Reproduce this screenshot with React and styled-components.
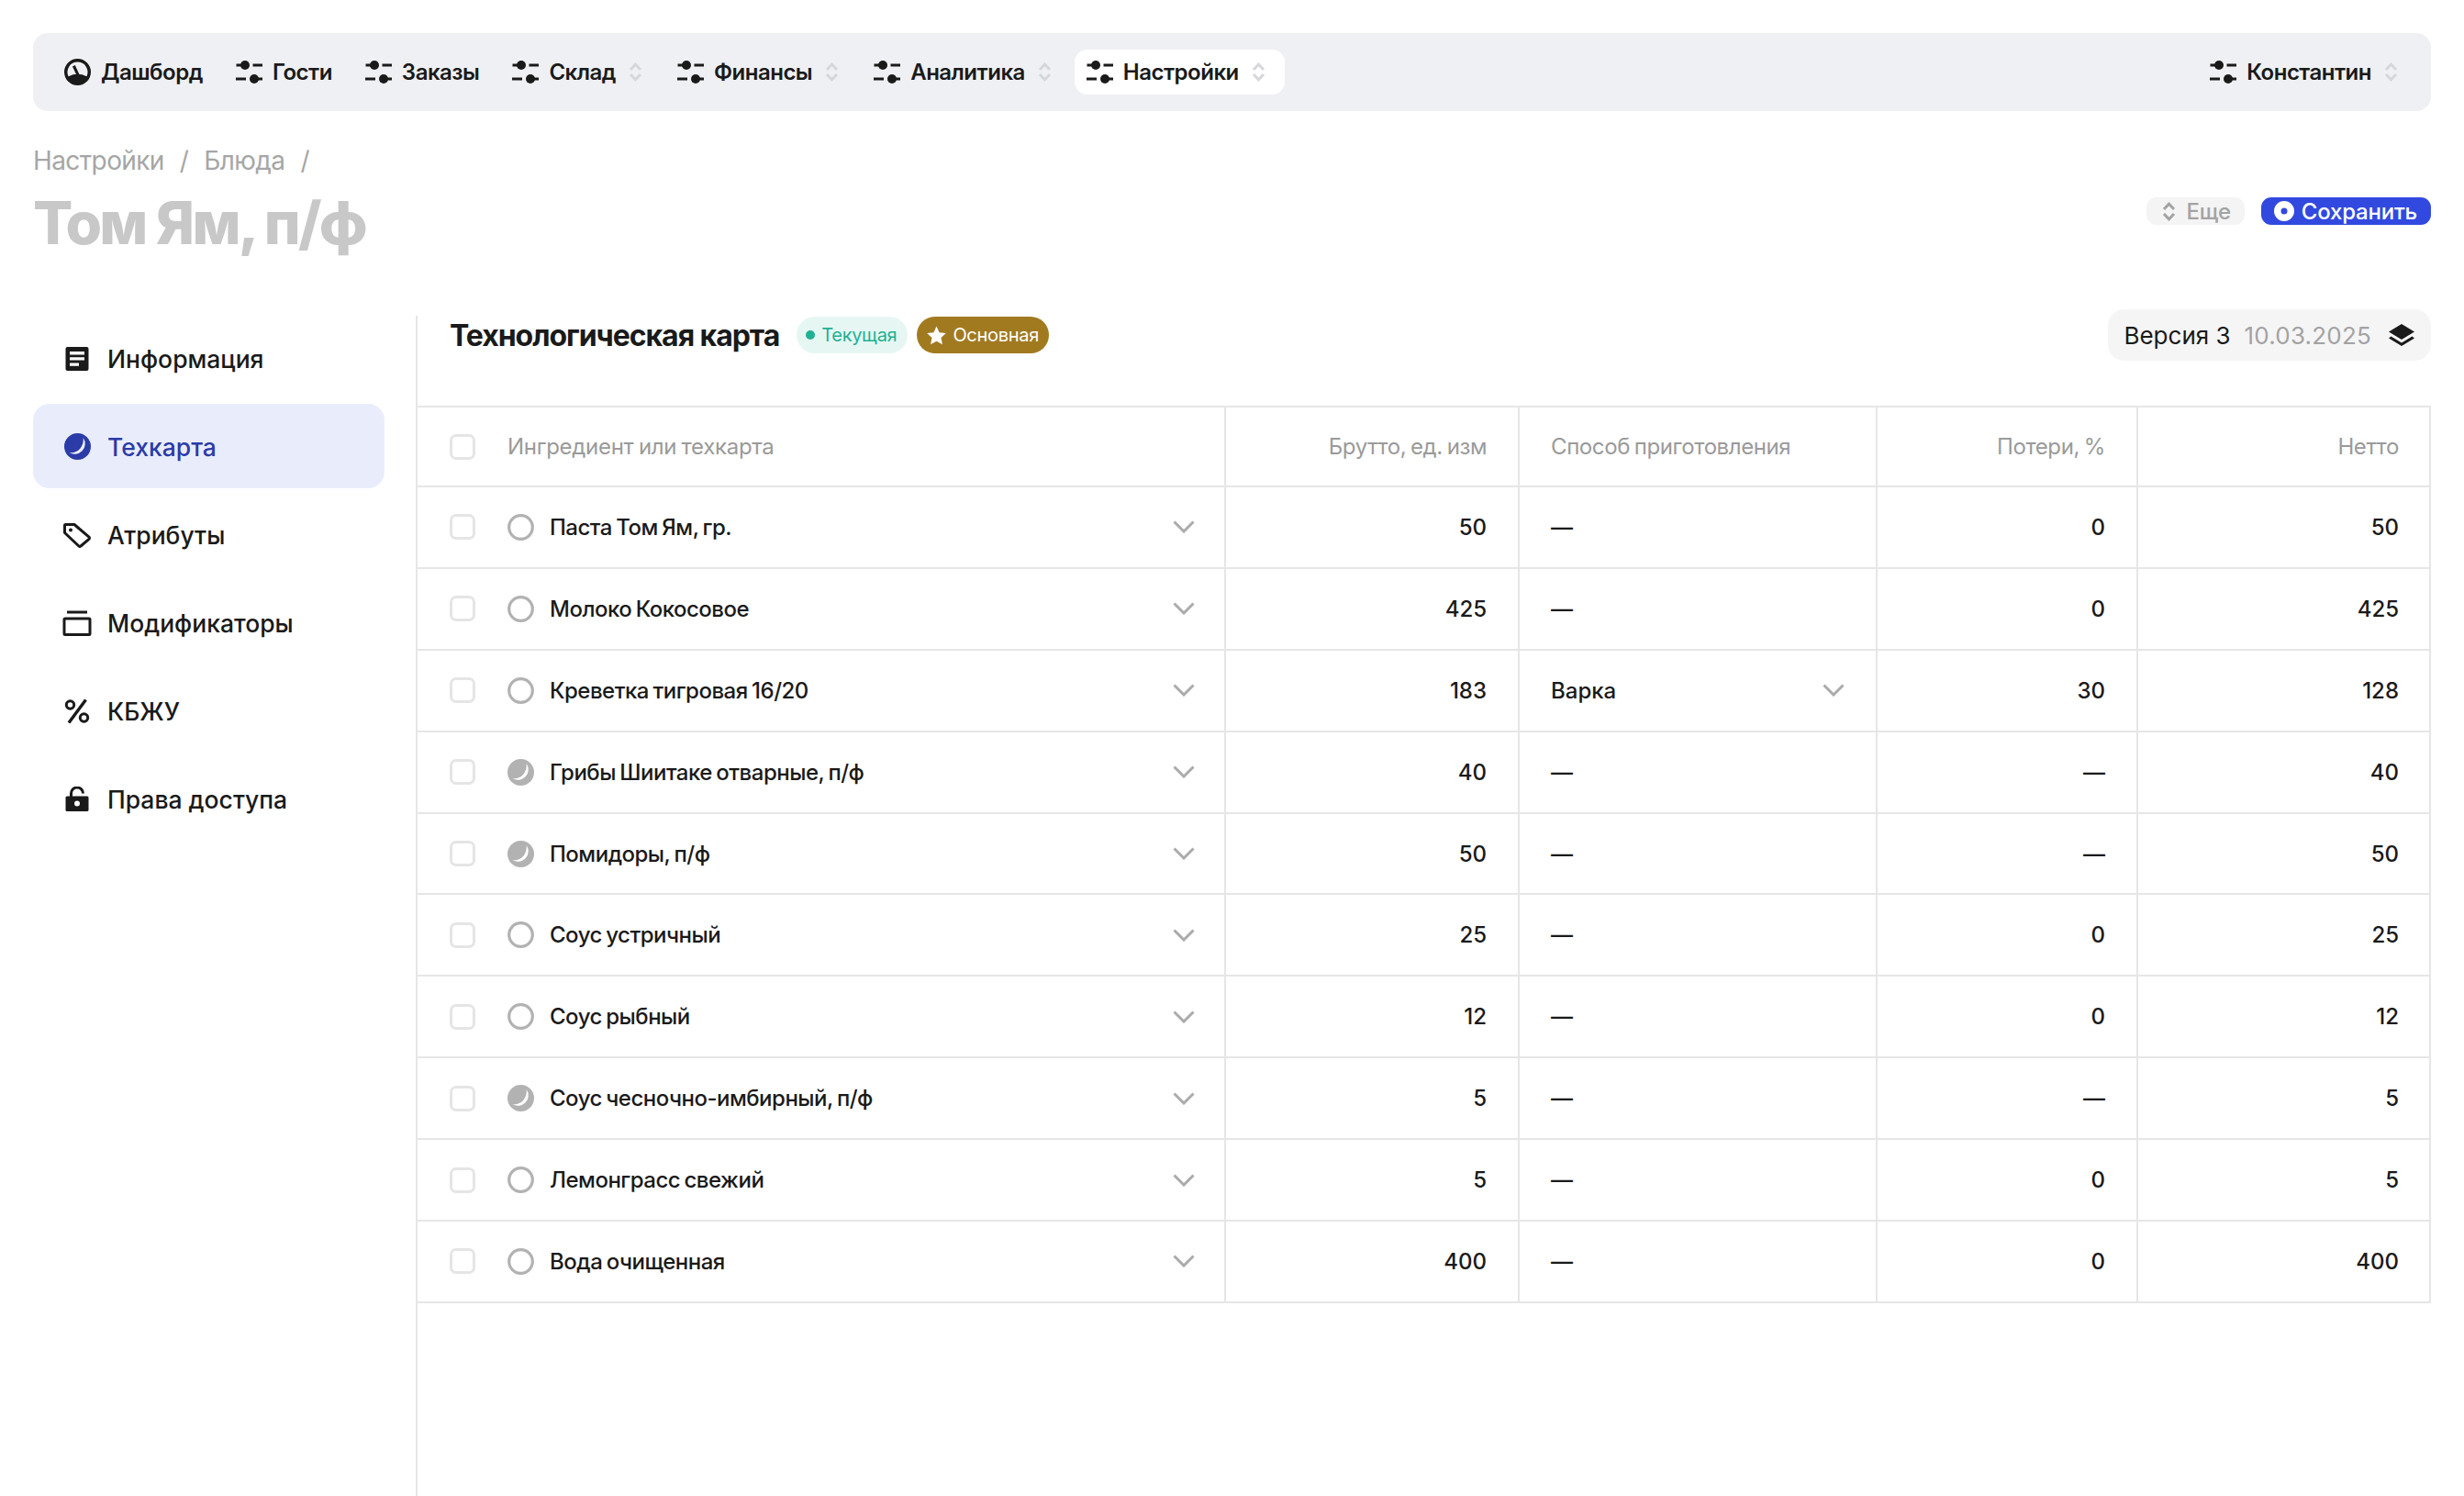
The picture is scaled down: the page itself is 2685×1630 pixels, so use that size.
import styled, { createGlobalStyle } from 'styled-components';

const Global = createGlobalStyle`
  * { box-sizing: border-box; }
  html, body { margin: 0; padding: 0; background: #fff; }
  body { font-family: Inter, "Noto Sans", sans-serif; color: #1a1a1a; }
`;

const Page = styled.div`
  height: 1630px;
  padding: 36px 36px 0;
  display: flex;
  flex-direction: column;
  overflow: hidden;
`;

const Nav = styled.nav`
  height: 85px;
  flex: none;
  background: #eff0f3;
  border-radius: 16px;
  padding: 0 21px;
  display: flex;
  align-items: center;
  gap: 10px;
`;

const NavItem = styled.div`
  height: 49px;
  padding: 0 ${(p) => (p.$active ? '19px' : '13px')} 0 13px;
  display: flex;
  align-items: center;
  gap: 11px;
  border-radius: 14px;
  font-size: 24px;
  font-weight: 600;
  letter-spacing: -0.5px;
  white-space: nowrap;
  background: ${(p) => (p.$active ? '#fff' : 'transparent')};
  margin-left: ${(p) => (p.$end ? 'auto' : '0')};
`;

const NavArrow = styled.span`
  display: flex;
  margin: 0 2px 0 3px;
`;

const Head = styled.header`
  margin-top: 35px;
  height: 188px;
  flex: none;
  display: flex;
  justify-content: space-between;
  align-items: flex-start;
`;

const Crumbs = styled.div`
  display: flex;
  gap: 17px;
  font-size: 28px;
  line-height: 38px;
  letter-spacing: -0.6px;
  color: #a6a6a6;
`;

const Title = styled.h1`
  margin: 15px 0 0;
  font-size: 64px;
  line-height: 68px;
  font-weight: 800;
  letter-spacing: -2.8px;
  color: #c8c8c8;
`;

const Actions = styled.div`
  margin-top: 59px;
  display: flex;
  gap: 18px;
`;

const Action = styled.div`
  height: 30px;
  padding: 0 15px 0 ${(p) => (p.$primary ? '14px' : '17px')};
  display: flex;
  align-items: center;
  gap: ${(p) => (p.$primary ? '8px' : '12px')};
  border-radius: 11px;
  font-size: 24px;
  font-weight: 500;
  letter-spacing: -0.2px;
  background: ${(p) => (p.$primary ? '#3249e0' : '#f4f4f5')};
  color: ${(p) => (p.$primary ? '#fff' : '#a3a3a3')};
`;

const Body = styled.div`
  flex: 1;
  display: flex;
  min-height: 0;
`;

const Side = styled.aside`
  width: 417px;
  flex: none;
  padding-right: 34px;
  display: flex;
  flex-direction: column;
  gap: 4px;
`;

const SideItem = styled.div`
  height: 92px;
  padding: 1px 0 0 32px;
  display: flex;
  align-items: center;
  gap: 17px;
  border-radius: 18px;
  font-size: 26.5px;
  font-weight: 500;
  background: ${(p) => (p.$active ? '#e9edfb' : 'transparent')};
  color: ${(p) => (p.$active ? '#2b3ba8' : '#1a1a1a')};
`;

const SideIcon = styled.span`
  width: 32px;
  display: flex;
  justify-content: center;
`;

const Main = styled.main`
  flex: 1;
  min-width: 0;
  border-left: 2px solid #e6e6e6;
`;

const SectionHead = styled.div`
  height: 42px;
  margin-bottom: 56px;
  padding-left: 35px;
  display: flex;
  align-items: center;
  gap: 19px;
`;

const SectionTitle = styled.h2`
  margin: 0;
  font-size: 32px;
  font-weight: 700;
  letter-spacing: -1.05px;
  white-space: nowrap;
`;

const Badges = styled.div`
  display: flex;
  gap: 10px;
`;

const Badge = styled.div`
  height: 40px;
  padding: 0 ${(p) => (p.$gold ? '11px' : '12px')} 0 10px;
  display: flex;
  align-items: center;
  gap: ${(p) => (p.$gold ? '6px' : '7px')};
  border-radius: 20px;
  font-size: 20px;
  letter-spacing: -0.3px;
  background: ${(p) => (p.$gold ? '#a17a20' : '#e6f7f3')};
  color: ${(p) => (p.$gold ? '#fff' : '#1fb193')};
`;

const Dot = styled.span`
  width: 10px;
  height: 10px;
  border-radius: 50%;
  background: #1fb193;
`;

const Version = styled.div`
  margin-left: auto;
  height: 56px;
  padding: 0 17px;
  display: flex;
  align-items: center;
  gap: 15px;
  border-radius: 18px;
  background: #f5f5f6;
  font-size: 26px;
`;

const VersionDate = styled.span`
  color: #a3a3a3;
  letter-spacing: 0.2px;
  margin-right: 3px;
`;

const Table = styled.div`
  border-top: 2px solid #e6e6e6;
  border-right: 2px solid #e6e6e6;
`;

const Row = styled.div`
  display: grid;
  grid-template-columns: 879px 320px 390px 284px 1fr;
  height: ${(p) => (p.$header ? '87px' : '88.9px')};
  border-bottom: 2px solid #e6e6e6;
  font-size: 24px;
  color: ${(p) => (p.$header ? '#9a9a9a' : '#1a1a1a')};

  & > :last-child {
    padding-right: 33px;
  }
`;

const Cell = styled.div`
  display: flex;
  align-items: center;
  justify-content: ${(p) => (p.$right ? 'flex-end' : 'flex-start')};
  padding: 0 34px;
  border-left: 2px solid #e6e6e6;
  font-weight: ${(p) => (p.$header ? 400 : 450)};
  ${(p) => p.$header && 'letter-spacing: -0.4px; word-spacing: -1.5px;'}
`;

const NameCell = styled.div`
  display: flex;
  align-items: center;
  padding: 0 32px 0 35px;
  font-weight: ${(p) => (p.$header ? 400 : 450)};
  ${(p) => p.$header && 'letter-spacing: -0.3px; word-spacing: -1px;'}
`;

const Check = styled.span`
  width: 28px;
  height: 28px;
  flex: none;
  margin-right: 35px;
  border: 3px solid #e5e5e5;
  border-radius: 7px;
`;

const Name = styled.span`
  margin-left: 17px;
  flex: 1;
  letter-spacing: -0.5px;
  word-spacing: -1.5px;
`;

const Select = styled.div`
  flex: 1;
  display: flex;
  align-items: center;
  justify-content: space-between;
`;

const Sliders = () => (
  <svg width="29" height="25" viewBox="0 0 29 25" fill="none">
    <circle cx="10" cy="5" r="5" fill="#1a1a1a" />
    <circle cx="20" cy="20" r="5" fill="#1a1a1a" />
    <path d="M0.5 5H10M18.5 5H29M0 20H11M20 20H29" stroke="#1a1a1a" strokeWidth="3" />
  </svg>
);

const UpDown = ({ color = '#d6d7db' }) => (
  <svg width="15" height="23" viewBox="0 0 15 23" fill="none">
    <path d="M2 9L7.5 3.2L13 9M2 14L7.5 19.8L13 14" stroke={color} strokeWidth="3" />
  </svg>
);

const Gauge = () => (
  <svg width="29" height="29" viewBox="0 0 28 28">
    <path
      fillRule="evenodd"
      fill="#1a1a1a"
      d="M14 0a14 14 0 1 0 0 28a14 14 0 1 0 0-28ZM14 3.4A10.6 10.6 0 0 0 4.4 18.6Q14 13.8 23.6 18.6A10.6 10.6 0 0 0 14 3.4Z"
    />
    <path d="M10 7.5L14.5 17" stroke="#1a1a1a" strokeWidth="3" />
  </svg>
);

const Moon = ({ color, size = 29 }) => (
  <svg width={size} height={size} viewBox="0 0 28 28">
    <path
      fillRule="evenodd"
      fill={color}
      d="M14 0a14 14 0 1 0 0 28a14 14 0 1 0 0-28ZM20 4.800A11 11 0 0 1 5 20.300C13 22 21 15 20 4.800Z"
    />
  </svg>
);

const Ring = () => (
  <svg width="29" height="29" viewBox="0 0 29 29" fill="none">
    <circle cx="14.5" cy="14.5" r="12.8" stroke="#b2b2b2" strokeWidth="3.2" />
  </svg>
);

const Chevron = () => (
  <svg width="24" height="14" viewBox="0 0 24 14" fill="none">
    <path d="M1.5 1.5L12 12L22.5 1.5" stroke="#ababab" strokeWidth="3" />
  </svg>
);

const Doc = () => (
  <svg width="32" height="28" viewBox="0 0 32 28">
    <path
      fillRule="evenodd"
      fill="#1a1a1a"
      d="M5.5 1h21a2 2 0 0 1 2 2v22a2 2 0 0 1-2 2h-21a2 2 0 0 1-2-2V3a2 2 0 0 1 2-2ZM8 6v3.4h16V6ZM8 12.2v3.4h16v-3.4ZM8 18.4v3.4h10v-3.4Z"
    />
  </svg>
);

const Tag = () => (
  <svg width="32" height="28" viewBox="0 0 32 28" fill="none">
    <path
      d="M3.5 2.5h9.5L29 16.2a1.5 1.5 0 0 1 0 2.2L20 26a1.5 1.5 0 0 1-2.1 0L2.500 11.500V3.500a1 1 0 0 1 1-1Z"
      stroke="#1a1a1a"
      strokeWidth="3"
      strokeLinejoin="round"
    />
    <circle cx="9" cy="8.5" r="2" fill="#1a1a1a" />
  </svg>
);

const Layers = () => (
  <svg width="32" height="28" viewBox="0 0 32 28" fill="none">
    <path d="M5 2h22" stroke="#1a1a1a" strokeWidth="3" />
    <rect x="2" y="9" width="28" height="17.500" rx="1" stroke="#1a1a1a" strokeWidth="3" />
  </svg>
);

const Percent = () => (
  <svg width="32" height="28" viewBox="0 0 32 28" fill="none">
    <circle cx="8.500" cy="7" r="4.200" stroke="#1a1a1a" strokeWidth="3" />
    <circle cx="23.500" cy="21" r="4.200" stroke="#1a1a1a" strokeWidth="3" />
    <path d="M25.500 1.500L7 26.500" stroke="#1a1a1a" strokeWidth="3.400" />
  </svg>
);

const Lock = () => (
  <svg width="32" height="28" viewBox="0 0 32 28">
    <path d="M9.500 12V7.500a6.500 6.500 0 0 1 13 0" fill="none" stroke="#1a1a1a" strokeWidth="3" />
    <path
      fillRule="evenodd"
      fill="#1a1a1a"
      d="M5 10.500h22a1.500 1.500 0 0 1 1.500 1.500v13.500a1.500 1.500 0 0 1-1.500 1.500H5a1.500 1.500 0 0 1-1.500-1.500V12A1.500 1.500 0 0 1 5 10.500ZM16 15.500a3 3 0 1 0 0 6a3 3 0 1 0 0-6Z"
    />
  </svg>
);

const Star = () => (
  <svg width="23" height="23" viewBox="0 0 24 24">
    <path fill="#fff" d="M12 1.500l3.200 7 7.600.9-5.600 5.200 1.500 7.600L12 18.400l-6.700 3.800 1.500-7.600L1.200 9.400l7.600-.9Z" />
  </svg>
);

const Stack = () => (
  <svg width="30" height="26" viewBox="0 0 30 26">
    <path fill="#1a1a1a" d="M15 1L29 9.500L15 18L1 9.500Z" />
    <path fill="#1a1a1a" d="M3.500 14.500L15 21.500L26.500 14.500L29 16.500L15 25L1 16.500Z" />
  </svg>
);

const Record = () => (
  <svg width="22" height="22" viewBox="0 0 22 22">
    <path fillRule="evenodd" fill="#fff" d="M11 0a11 11 0 1 0 0 22a11 11 0 1 0 0-22ZM11 7.500a3.500 3.500 0 1 1 0 7a3.500 3.500 0 1 1 0-7Z" />
  </svg>
);

const navItems = [
  { label: 'Гости' },
  { label: 'Заказы' },
  { label: 'Склад', menu: true },
  { label: 'Финансы', menu: true },
  { label: 'Аналитика', menu: true },
  { label: 'Настройки', menu: true, active: true },
];

const sideItems = [
  { label: 'Информация', icon: <Doc /> },
  { label: 'Техкарта', icon: <Moon color="#2b3ba8" />, active: true },
  { label: 'Атрибуты', icon: <Tag /> },
  { label: 'Модификаторы', icon: <Layers /> },
  { label: 'КБЖУ', icon: <Percent /> },
  { label: 'Права доступа', icon: <Lock /> },
];

const rows = [
  { name: 'Паста Том Ям, гр.', gross: '50', method: '—', loss: '0', net: '50' },
  { name: 'Молоко Кокосовое', gross: '425', method: '—', loss: '0', net: '425' },
  { name: 'Креветка тигровая 16/20', gross: '183', method: 'Варка', loss: '30', net: '128' },
  { name: 'Грибы Шиитаке отварные, п/ф', gross: '40', method: '—', loss: '—', net: '40', half: true },
  { name: 'Помидоры, п/ф', gross: '50', method: '—', loss: '—', net: '50', half: true },
  { name: 'Соус устричный', gross: '25', method: '—', loss: '0', net: '25' },
  { name: 'Соус рыбный', gross: '12', method: '—', loss: '0', net: '12' },
  { name: 'Соус чесночно-имбирный, п/ф', gross: '5', method: '—', loss: '—', net: '5', half: true },
  { name: 'Лемонграсс свежий', gross: '5', method: '—', loss: '0', net: '5' },
  { name: 'Вода очищенная', gross: '400', method: '—', loss: '0', net: '400' },
];

export default function App() {
  return (
    <Page>
      <Global />
      <Nav>
        <NavItem>
          <Gauge />
          Дашборд
        </NavItem>
        {navItems.map((item) => (
          <NavItem key={item.label} $active={item.active}>
            <Sliders />
            {item.label}
            {item.menu && (
              <NavArrow>
                <UpDown />
              </NavArrow>
            )}
          </NavItem>
        ))}
        <NavItem $end>
          <Sliders />
          Константин
          <NavArrow>
            <UpDown />
          </NavArrow>
        </NavItem>
      </Nav>

      <Head>
        <div>
          <Crumbs>
            <span>Настройки</span>
            <span>/</span>
            <span>Блюда</span>
            <span>/</span>
          </Crumbs>
          <Title>Том Ям, п/ф</Title>
        </div>
        <Actions>
          <Action>
            <UpDown color="#a3a3a3" />
            Еще
          </Action>
          <Action $primary>
            <Record />
            Сохранить
          </Action>
        </Actions>
      </Head>

      <Body>
        <Side>
          {sideItems.map((item) => (
            <SideItem key={item.label} $active={item.active}>
              <SideIcon>{item.icon}</SideIcon>
              {item.label}
            </SideItem>
          ))}
        </Side>
        <Main>
          <SectionHead>
            <SectionTitle>Технологическая карта</SectionTitle>
            <Badges>
              <Badge>
                <Dot />
                Текущая
              </Badge>
              <Badge $gold>
                <Star />
                Основная
              </Badge>
            </Badges>
            <Version>
              <span>Версия 3</span>
              <VersionDate>10.03.2025</VersionDate>
              <Stack />
            </Version>
          </SectionHead>

          <Table>
            <Row $header>
              <NameCell $header>
                <Check />
                Ингредиент или техкарта
              </NameCell>
              <Cell $header $right>Брутто, ед. изм</Cell>
              <Cell $header>Способ приготовления</Cell>
              <Cell $header $right>Потери, %</Cell>
              <Cell $header $right>Нетто</Cell>
            </Row>
            {rows.map((row) => (
              <Row key={row.name}>
                <NameCell>
                  <Check />
                  {row.half ? <Moon color="#b2b2b2" /> : <Ring />}
                  <Name>{row.name}</Name>
                  <Chevron />
                </NameCell>
                <Cell $right>{row.gross}</Cell>
                <Cell>
                  {row.method === '—' ? (
                    row.method
                  ) : (
                    <Select>
                      {row.method}
                      <Chevron />
                    </Select>
                  )}
                </Cell>
                <Cell $right>{row.loss}</Cell>
                <Cell $right>{row.net}</Cell>
              </Row>
            ))}
          </Table>
        </Main>
      </Body>
    </Page>
  );
}
